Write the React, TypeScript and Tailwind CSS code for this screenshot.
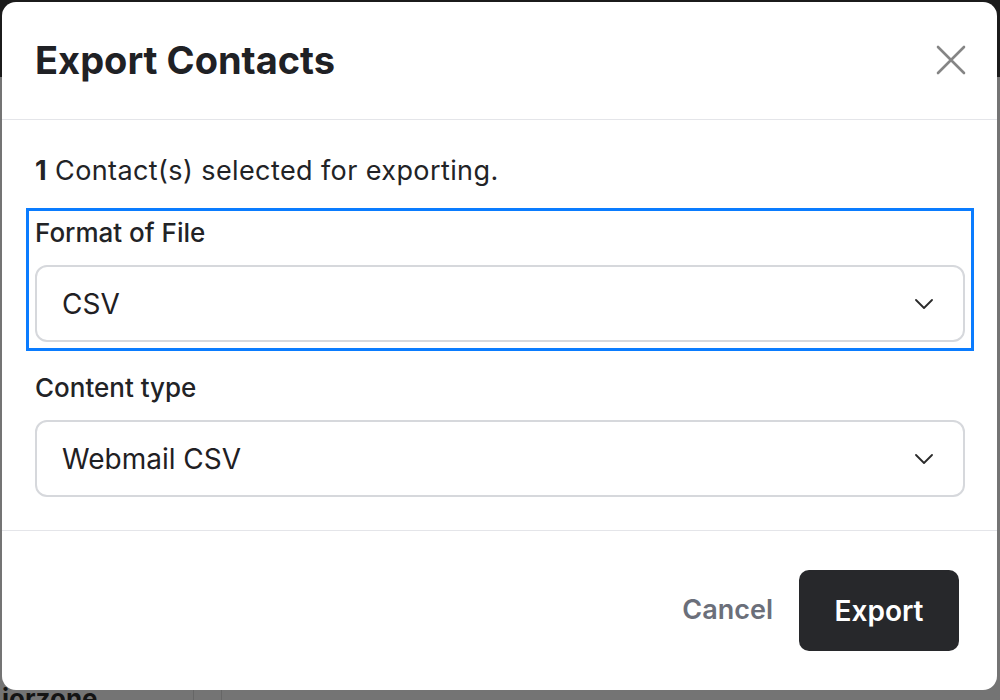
import { useState } from "react";

function Chevron() {
  return (
    <svg width="18" height="10" viewBox="0 0 18 10" fill="none" className="shrink-0">
      <path d="M1 1l8 8 8-8" stroke="#2a2a2a" strokeWidth="1.8" strokeLinecap="round" strokeLinejoin="round" />
    </svg>
  );
}

function SelectField({ label, value, focused }: { label: string; value: string; focused?: boolean }) {
  return (
    <div className={`flex flex-col gap-4 ${focused ? "outline-[3px] outline-solid outline-[#0a7cff] outline-offset-[6px]" : ""}`}>
      <p className="text-[26px] leading-8 font-medium text-[#222326]">{label}</p>
      <div className="h-[77px] flex items-center justify-between rounded-[12px] border-2 border-[#d6d8dc] bg-white pl-[25px] pr-[30px]">
        <span className="text-[28px] text-[#1f2023]">{value}</span>
        <Chevron />
      </div>
    </div>
  );
}

export default function App() {
  const [count] = useState<number>(1);

  return (
    <div className="relative h-[700px] w-[1000px] overflow-hidden bg-[#747474] font-['Inter','Liberation_Sans',sans-serif]">
      {/* page behind the backdrop */}
      <div className="flex h-full flex-col">
        <div className="h-[77px] bg-[#1b1b1b]"></div>
        <div className="flex-1"></div>
        <div className="flex h-[12px] items-start">
          <p className="-mt-[2px] pl-[2px] text-[26px] leading-none font-bold text-[#141414]">iorzone</p>
          <div className="ml-[95px] h-full w-px bg-[#666]"></div>
          <div className="ml-[27px] h-full w-px bg-[#666]"></div>
        </div>
      </div>

      {/* modal */}
      <div className="absolute inset-0 pl-[2px] pt-[2px]">
        <div className="flex h-[688px] w-[995px] flex-col rounded-[14px] bg-white">
          <div className="flex h-[118px] items-center justify-between border-b border-[#e4e5e9] pl-[33px] pr-[31px]">
            <h1 className="text-[38px] font-bold text-[#1f2125]">Export Contacts</h1>
            <button className="-mt-[2px] p-0">
              <svg width="30" height="30" viewBox="0 0 30 30" fill="none">
                <path d="M2 2l26 26M28 2L2 28" stroke="#858585" strokeWidth="2.6" strokeLinecap="round" />
              </svg>
            </button>
          </div>

          <div className="flex flex-col gap-[30px] border-b border-[#e4e5e9] pl-[33px] pr-[32px] pt-[35px] pb-[33px]">
            <p className="text-[27px] leading-8 tracking-[0.4px] text-[#222326]">
              <span className="font-bold">{count}</span> Contact(s) selected for exporting.
            </p>
            <SelectField label="Format of File" value="CSV" focused />
            <SelectField label="Content type" value="Webmail CSV" />
          </div>

          <div className="flex flex-1 items-center justify-end gap-[26px] pr-[38px]">
            <button className="text-[27px] font-semibold text-[#6b6f7a]">Cancel</button>
            <button className="h-[81px] w-[160px] rounded-[10px] bg-[#27282b] text-[28px] font-semibold text-white">Export</button>
          </div>
        </div>
      </div>
    </div>
  );
}
